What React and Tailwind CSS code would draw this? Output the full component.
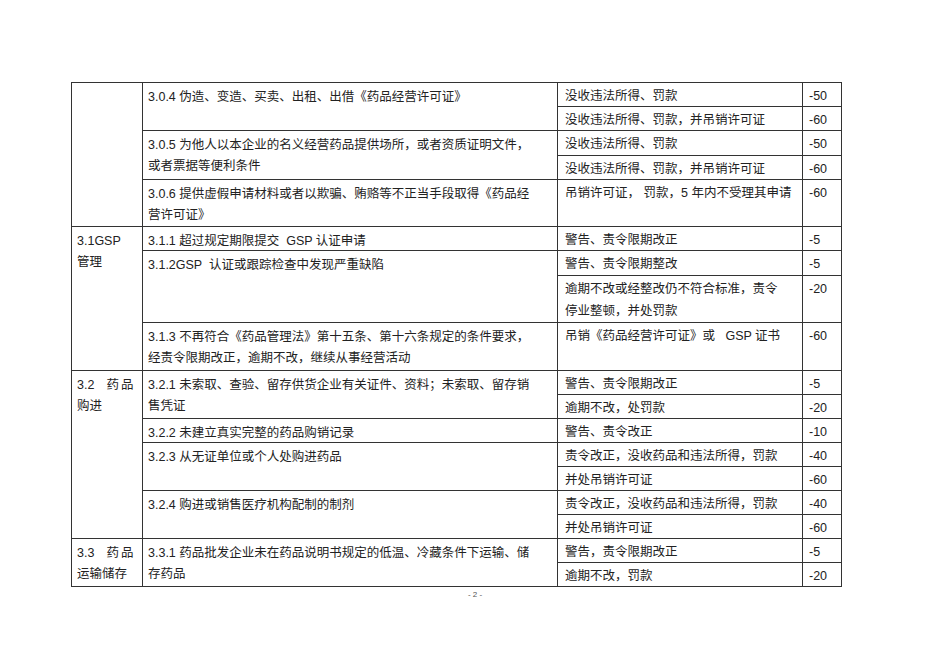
import React from "react";

const font = { fontFamily: '"Liberation Sans", "Noto Sans CJK SC", sans-serif' };

const C1 = ({ rows, children }) => (
  <td rowSpan={rows} className="border border-[#333] align-top pl-[5px] pr-[8px] pt-[4px] leading-[21px] whitespace-pre">
    <div className="-mb-[2px]">{children}</div>
  </td>
);
const C2 = ({ rows, children }) => (
  <td rowSpan={rows} className="border border-[#333] align-top pl-[5px] pt-[4px] leading-[21px] whitespace-pre">
    <div className="-mb-[2px]">{children}</div>
  </td>
);
const C3 = ({ children }) => (
  <td className="border border-[#333] align-top pl-[7px] pt-[2px] leading-[22px] whitespace-pre">
    <div className="-mb-[1px]">{children}</div>
  </td>
);
const C4 = ({ children }) => (
  <td className="border border-[#333] align-top pl-[6px] pt-[4px] leading-[19px]">{children}</td>
);

const Just = ({ a, b, c }) => (
  <span className="whitespace-nowrap">
    {a}
    <span className="ml-[12px]">{b}</span>
    <span className="ml-[2px]">{c}</span>
  </span>
);

export default function App() {
  return (
    <div className="w-[950px] h-[672px] bg-white text-[#222] text-[12.5px]" style={font}>
      <div className="pt-[82px] pl-[71px]">
        <table className="table-fixed border-collapse w-[770px]">
          <colgroup>
            <col className="w-[71px]" />
            <col className="w-[415px]" />
            <col className="w-[245px]" />
            <col className="w-[39px]" />
          </colgroup>
          <tbody>
            <tr className="h-[24px]">
              <C1 rows={5}></C1>
              <C2 rows={2}>3.0.4 伪造、变造、买卖、出租、出借《药品经营许可证》</C2>
              <C3>没收违法所得、罚款</C3>
              <C4>-50</C4>
            </tr>
            <tr className="h-[24px]">
              <C3>没收违法所得、罚款，并吊销许可证</C3>
              <C4>-60</C4>
            </tr>
            <tr className="h-[25px]">
              <C2 rows={2}>
                3.0.5 为他人以本企业的名义经营药品提供场所，或者资质证明文件，
                <br />
                或者票据等便利条件
              </C2>
              <C3>没收违法所得、罚款</C3>
              <C4>-50</C4>
            </tr>
            <tr className="h-[24px]">
              <C3>没收违法所得、罚款，并吊销许可证</C3>
              <C4>-60</C4>
            </tr>
            <tr className="h-[47px]">
              <C2 rows={1}>
                3.0.6 提供虚假申请材料或者以欺骗、贿赂等不正当手段取得《药品经
                <br />
                营许可证》
              </C2>
              <C3>吊销许可证， 罚款，5 年内不受理其申请</C3>
              <C4>-60</C4>
            </tr>
            <tr className="h-[24px]">
              <C1 rows={4}>
                3.1GSP
                <br />
                管理
              </C1>
              <C2 rows={1}>3.1.1 超过规定期限提交  GSP 认证申请</C2>
              <C3>警告、责令限期改正</C3>
              <C4>-5</C4>
            </tr>
            <tr className="h-[25px]">
              <C2 rows={2}>3.1.2GSP  认证或跟踪检查中发现严重缺陷</C2>
              <C3>警告、责令限期整改</C3>
              <C4>-5</C4>
            </tr>
            <tr className="h-[47px]">
              <C3>
                逾期不改或经整改仍不符合标准，责令
                <br />
                停业整顿，并处罚款
              </C3>
              <C4>-20</C4>
            </tr>
            <tr className="h-[48px]">
              <C2 rows={1}>
                3.1.3 不再符合《药品管理法》第十五条、第十六条规定的条件要求，
                <br />
                经责令限期改正，逾期不改，继续从事经营活动
              </C2>
              <C3>吊销《药品经营许可证》或   GSP 证书</C3>
              <C4>-60</C4>
            </tr>
            <tr className="h-[24px]">
              <C1 rows={7}>
                <Just a="3.2" b="药" c="品" />
                <br />
                购进
              </C1>
              <C2 rows={2}>
                3.2.1 未索取、查验、留存供货企业有关证件、资料；未索取、留存销
                <br />
                售凭证
              </C2>
              <C3>警告、责令限期改正</C3>
              <C4>-5</C4>
            </tr>
            <tr className="h-[24px]">
              <C3>逾期不改，处罚款</C3>
              <C4>-20</C4>
            </tr>
            <tr className="h-[24px]">
              <C2 rows={1}>3.2.2 未建立真实完整的药品购销记录</C2>
              <C3>警告、责令改正</C3>
              <C4>-10</C4>
            </tr>
            <tr className="h-[24px]">
              <C2 rows={2}>3.2.3 从无证单位或个人处购进药品</C2>
              <C3>责令改正，没收药品和违法所得，罚款</C3>
              <C4>-40</C4>
            </tr>
            <tr className="h-[24px]">
              <C3>并处吊销许可证</C3>
              <C4>-60</C4>
            </tr>
            <tr className="h-[24px]">
              <C2 rows={2}>3.2.4 购进或销售医疗机构配制的制剂</C2>
              <C3>责令改正，没收药品和违法所得，罚款</C3>
              <C4>-40</C4>
            </tr>
            <tr className="h-[24px]">
              <C3>并处吊销许可证</C3>
              <C4>-60</C4>
            </tr>
            <tr className="h-[24px]">
              <C1 rows={2}>
                <Just a="3.3" b="药" c="品" />
                <br />
                运输储存
              </C1>
              <C2 rows={2}>
                3.3.1 药品批发企业未在药品说明书规定的低温、冷藏条件下运输、储
                <br />
                存药品
              </C2>
              <C3>警告，责令限期改正</C3>
              <C4>-5</C4>
            </tr>
            <tr className="h-[24px]">
              <C3>逾期不改，罚款</C3>
              <C4>-20</C4>
            </tr>
          </tbody>
        </table>
      </div>
      <div className="mt-[3px] text-center text-[8px] leading-[10px] text-[#555]">- 2 -</div>
    </div>
  );
}
